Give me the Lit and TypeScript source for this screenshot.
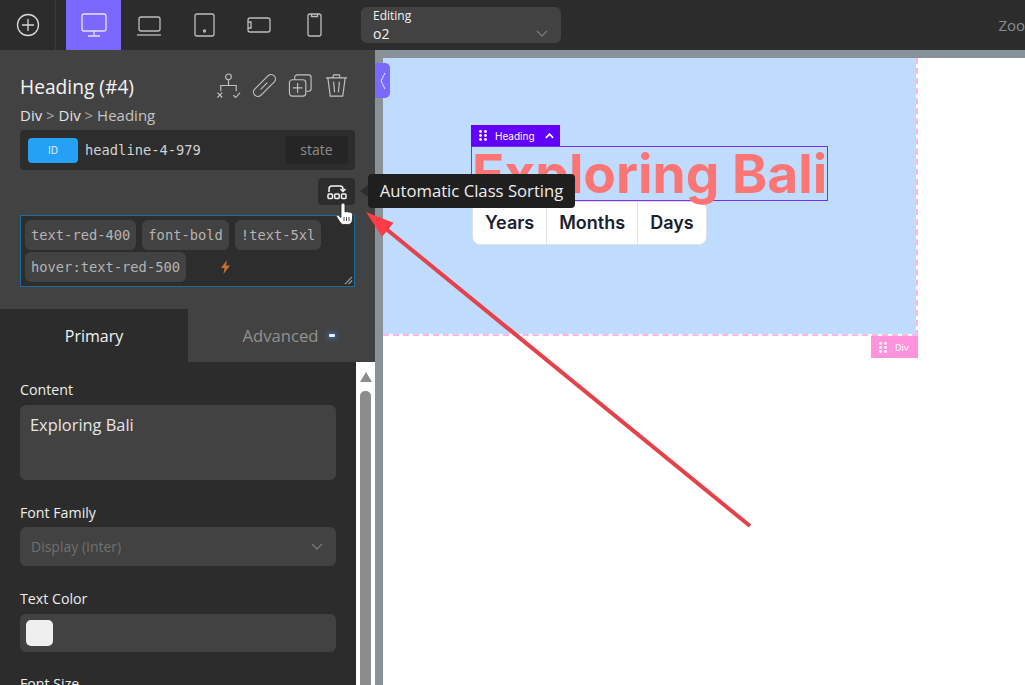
import { LitElement, css, html, svg } from 'lit';
import { customElement } from 'lit/decorators.js';

const deviceIcons = [
  svg`<rect x="3" y="3" width="24" height="17" rx="2"/><path d="M15 20v4M9 25h12"/>`,
  svg`<rect x="5" y="6" width="21" height="14" rx="2"/><path d="M3 24h24"/>`,
  svg`<rect x="6" y="3" width="19" height="22" rx="2"/><circle cx="15.5" cy="20" r="1"/>`,
  svg`<rect x="4" y="7" width="22" height="14" rx="2"/><path d="M4 11h3v6H4"/>`,
  svg`<rect x="9" y="3" width="13" height="22" rx="2"/><path d="M12.5 3v2.500h6V3"/>`,
];

const chevron = html`<svg class="chevron" viewBox="0 0 12 8"><path d="M1 1l5 5 5-5"/></svg>`;

const dragDots = html`<svg class="dots" viewBox="0 0 8 11">
  <circle cx="1.500" cy="1.500" r="1.400"/><circle cx="6.500" cy="1.500" r="1.400"/>
  <circle cx="1.500" cy="5.500" r="1.400"/><circle cx="6.500" cy="5.500" r="1.400"/>
  <circle cx="1.500" cy="9.500" r="1.400"/><circle cx="6.500" cy="9.500" r="1.400"/>
</svg>`;

@customElement('app-root')
export class AppRoot extends LitElement {
  render() {
    return html`
      <div class="top">
        <div class="add">
          <svg viewBox="0 0 24 24"><circle cx="12" cy="12" r="10.500"/><path d="M12 6v12M6 12h12"/></svg>
        </div>
        <div class="devices">
          ${deviceIcons.map(
            (icon, i) => html`<div class="device ${i === 0 ? 'on' : ''}"><svg viewBox="0 0 30 28">${icon}</svg></div>`
          )}
        </div>
        <div class="editing">
          <span class="editing-label">Editing</span>
          <span class="editing-value">o2</span>
          ${chevron}
        </div>
        <span class="zoom">Zoom</span>
      </div>

      <div class="main">
        <aside class="side">
          <div class="head">
            <div class="title-row">
              <h2>Heading (#4)</h2>
              <div class="actions">
                <svg viewBox="0 0 26 26"><circle cx="13" cy="4" r="3"/><path d="M13 7v6M5 19v-6h16v6M1.500 20.500l5 5M6.500 20.500l-5 5M18 23l2.500 2.500L25 20.500"/></svg>
                <svg viewBox="0 0 26 26"><path d="M2.820 16.820L16.820 2.820a4.500 4.500 0 016.360 6.360L9.180 23.180a4.500 4.500 0 01-6.360-6.360zM9 17l7-7"/></svg>
                <svg viewBox="0 0 26 26"><rect x="1.500" y="7" width="17" height="17" rx="3"/><path d="M7 7V4.500a2.500 2.500 0 012.500-2.500h12A2.500 2.500 0 0124 4.500v12a2.500 2.500 0 01-2.500 2.500H19M10 10.500v10M5 15.500h10"/></svg>
                <svg viewBox="0 0 26 26"><path d="M2 5h22M9 5l1-3h6l1 3M4 5l2.500 19h13L22 5M10 9l1 11M16 9l-1 11"/></svg>
              </div>
            </div>
            <div class="crumbs">Div <i>&gt;</i> Div <i>&gt;</i> <b>Heading</b></div>
            <div class="id-bar">
              <span class="id-chip">ID</span>
              <span class="id-name">headline-4-979</span>
              <span class="state">state</span>
            </div>
            <div class="sort-row">
              <div class="sort">
                <svg viewBox="0 0 20 16">
                  <path d="M2 8V5a3 3 0 013-3h8a3 3 0 013 3v2.500M13.500 5L16 7.500 18.500 5" />
                  <rect x="1" y="10" width="4.500" height="4.500" rx="1"/><rect x="7.700" y="10" width="4.500" height="4.500" rx="1"/><rect x="14.500" y="10" width="4.500" height="4.500" rx="1"/>
                </svg>
              </div>
            </div>
            <div class="classes">
              <span class="chip">text-red-400</span>
              <span class="chip">font-bold</span>
              <span class="chip">!text-5xl</span>
              <span class="chip">hover:text-red-500</span>
              <svg class="bolt" viewBox="0 0 9 14"><path d="M6 0L0 8h3.500L2.500 14 9 5.500H5z"/></svg>
              <svg class="grip" viewBox="0 0 10 10"><path d="M1 9l8-8M5 9l4-4"/></svg>
            </div>
          </div>

          <div class="tabs">
            <div class="tab on">Primary</div>
            <div class="tab adv">Advanced<span class="pip"></span></div>
          </div>

          <div class="body">
            <div class="fields">
              <label>Content</label>
              <div class="input area">Exploring Bali</div>
              <label>Font Family</label>
              <div class="input select">Display (Inter)${chevron}</div>
              <label>Text Color</label>
              <div class="input color"><span class="swatch"></span></div>
              <label>Font Size</label>
            </div>
            <div class="scroll">
              <span class="up"></span>
              <span class="thumb"></span>
            </div>
          </div>
        </aside>

        <section class="canvas">
          <div class="page">
            <div class="block">
              <div class="heading-wrap">
                <div class="tag heading-tag">${dragDots}<span>Heading</span>
                  <svg class="caret" viewBox="0 0 10 6"><path d="M1 5l4-4 4 4"/></svg>
                </div>
                <h1>Exploring Bali</h1>
              </div>
              <div class="range">
                <span>Years</span><span>Months</span><span>Days</span>
              </div>
              <div class="tag div-tag">${dragDots}<span>Div</span></div>
            </div>
          </div>
          <div class="toggle">
            <svg viewBox="0 0 6 18"><path d="M5 1L1 9l4 8"/></svg>
          </div>
        </section>
      </div>

      <div class="tooltip">Automatic Class Sorting</div>
      <svg class="cursor" viewBox="0 0 17 22">
        <path d="M5 2a2 2 0 014 0V9h.5a1.800 1.800 0 013 .5 1.800 1.800 0 013 .5A1.800 1.800 0 0116.500 11.500V16c0 3-2 5.500-4 5.500H7.500C5 21.500 4 19 2 16L.7 14c-.8-1.500 1-2.500 2-1.500L5 14.500z"/>
        <path class="cursor-line" d="M8 14v4M10.500 14v4M13 14v4"/>
      </svg>
      <svg class="arrow" viewBox="0 0 1025 685">
        <path d="M750 526L385 228"/>
        <path class="arrow-tip" d="M366 212l27.500 10.700-5.500 7 -6 7z"/>
      </svg>
    `;
  }

  static styles = css`
    :host {
      display: block;
      position: relative;
      width: 1025px;
      height: 685px;
      overflow: hidden;
      font-family: 'Open Sans', 'Noto Sans', sans-serif;
      color: #f2f2f2;
      background: #2c2c2c;
    }

    svg {
      display: block;
      fill: none;
      stroke: currentColor;
    }

    .top {
      display: flex;
      align-items: center;
      height: 50px;
      background: #2c2c2c;
    }

    .add {
      display: flex;
      align-items: center;
      justify-content: center;
      box-sizing: border-box;
      width: 56px;
      height: 50px;
      border-right: 1px solid #363c3f;
      color: #d8d8d8;
    }

    .add svg {
      width: 24px;
      height: 24px;
      stroke-width: 1.300;
    }

    .devices {
      display: flex;
      margin-left: 10px;
    }

    .device {
      display: flex;
      align-items: center;
      justify-content: center;
      width: 55px;
      height: 50px;
      color: #bdbdbd;
    }

    .device.on {
      background: #7b68ff;
      color: #e6e3ff;
    }

    .device svg {
      width: 30px;
      height: 28px;
      stroke-width: 1.300;
    }

    .editing {
      position: relative;
      display: flex;
      flex-direction: column;
      box-sizing: border-box;
      width: 200px;
      height: 36px;
      margin-left: 20px;
      padding: 0 12px;
      border-radius: 6px;
      background: #424242;
      line-height: 18px;
    }

    .editing-label {
      font-size: 12px;
    }

    .editing-value {
      font-size: 14px;
    }

    .chevron {
      width: 12px;
      height: 8px;
      color: #777;
      stroke-width: 1.400;
    }

    .editing .chevron {
      position: absolute;
      right: 13px;
      bottom: 5px;
    }

    .zoom {
      margin-left: auto;
      margin-right: -14px;
      color: #8c8c8c;
      font-size: 15px;
    }

    .main {
      display: flex;
      height: 635px;
    }

    .side {
      display: flex;
      flex-direction: column;
      width: 375px;
      flex: none;
      background: #424242;
    }

    .head {
      box-sizing: border-box;
      height: 259px;
      padding: 20px 20px 0;
    }

    .title-row {
      display: flex;
      align-items: center;
      justify-content: space-between;
      height: 32px;
    }

    h2 {
      margin: 0;
      font-size: 19.200px;
      font-weight: 400;
      color: #f4f4f4;
    }

    .actions {
      display: flex;
      gap: 11px;
      margin: -2px 6px 0 0;
      color: #c2c2c2;
    }

    .actions svg {
      width: 25px;
      height: 25px;
      stroke-width: 1.200;
    }

    .crumbs {
      margin-top: 4px;
      font-size: 15px;
      line-height: 18px;
      color: #e4e4e4;
    }

    .crumbs i {
      font-style: normal;
      color: #a8a8a8;
    }

    .crumbs b {
      font-weight: 400;
      color: #c4c4c4;
    }

    .id-bar {
      display: flex;
      align-items: center;
      box-sizing: border-box;
      height: 40px;
      margin-top: 6px;
      padding: 0 7px 0 8px;
      border-radius: 4px;
      background: #2d2d2d;
    }

    .id-chip {
      width: 50px;
      height: 25px;
      border-radius: 4px;
      background: #24a0f5;
      color: #e8f5ff;
      font-size: 10px;
      line-height: 25px;
      text-align: center;
    }

    .id-name {
      margin-left: 7px;
      font: 13.750px 'DejaVu Sans Mono', monospace;
      color: #d2d2d2;
    }

    .state {
      width: 63px;
      height: 28px;
      margin-left: auto;
      border-radius: 4px;
      background: #252525;
      color: #8d8d8d;
      font-size: 14px;
      line-height: 28px;
      text-align: center;
    }

    .sort-row {
      display: flex;
      justify-content: flex-end;
      margin-top: 8px;
    }

    .sort {
      display: flex;
      align-items: center;
      justify-content: center;
      width: 37px;
      height: 27px;
      border-radius: 4px;
      background: #2d2d2d;
      color: #f5f5f5;
    }

    .sort svg {
      width: 20px;
      height: 16px;
      stroke-width: 1.500;
    }

    .classes {
      position: relative;
      display: flex;
      flex-wrap: wrap;
      align-content: flex-start;
      gap: 2px 6px;
      box-sizing: border-box;
      height: 72px;
      margin-top: 10px;
      padding: 4px;
      border: 1px solid #1f6a9c;
      background: #2d2d2d;
    }

    .chip {
      height: 30px;
      padding: 0 6px;
      border-radius: 6px;
      background: #424242;
      color: #b4b4b4;
      font: 13.750px/30px 'DejaVu Sans Mono', monospace;
    }

    .bolt {
      position: absolute;
      left: 200px;
      top: 44px;
      width: 9px;
      height: 14px;
      fill: #c8702e;
      stroke: none;
    }

    .grip {
      position: absolute;
      right: 1px;
      bottom: 1px;
      width: 9px;
      height: 9px;
      color: #9a9a9a;
      stroke-width: 1.400;
    }

    .tabs {
      display: flex;
      height: 53px;
    }

    .tab {
      display: flex;
      align-items: center;
      justify-content: center;
      font-size: 16px;
      color: #919191;
    }

    .tab.on {
      width: 188px;
      background: #2c2c2c;
      color: #f2f2f2;
    }

    .tab.adv {
      flex: 1;
      padding-left: 14px;
      font-size: 16.700px;
    }

    .pip {
      width: 6px;
      height: 3px;
      margin-left: 10px;
      border-radius: 1px;
      background: #e6f0fc;
      box-shadow: 0 0 5px 2px rgba(66, 133, 210, 0.55);
    }

    .body {
      display: flex;
      flex: 1;
      min-height: 0;
      background: #2c2c2c;
    }

    .fields {
      flex: 1;
      min-width: 0;
      padding: 17px 20px 0;
    }

    label {
      display: block;
      height: 20px;
      font-size: 14.200px;
      line-height: 22px;
      color: #eee;
    }

    .input {
      margin-top: 6px;
      border-radius: 6px;
      background: #424242;
    }

    .area {
      box-sizing: border-box;
      height: 75px;
      margin-bottom: 22px;
      padding: 8px 10px;
      font-size: 16.400px;
      line-height: 24px;
      color: #e6e6e6;
    }

    .select {
      display: flex;
      align-items: center;
      justify-content: space-between;
      box-sizing: border-box;
      height: 39px;
      margin-top: 5px;
      margin-bottom: 22px;
      padding: 0 13px 0 11px;
      font-size: 14px;
      color: #6f6f6f;
    }

    .color {
      display: flex;
      align-items: center;
      height: 38px;
      margin-bottom: 21px;
      padding-left: 6px;
    }

    .swatch {
      width: 27px;
      height: 26px;
      border-radius: 5px;
      background: #efefef;
    }

    .scroll {
      display: flex;
      flex-direction: column;
      align-items: center;
      width: 19px;
      background: #fff;
    }

    .up {
      width: 0;
      height: 0;
      margin-top: 10px;
      border-left: 6.500px solid transparent;
      border-right: 6.500px solid transparent;
      border-bottom: 10px solid #8c8c8c;
    }

    .thumb {
      flex: 1;
      width: 11px;
      margin-top: 9px;
      border-radius: 5px 5px 0 0;
      background: #8c8c8c;
    }

    .canvas {
      position: relative;
      flex: 1;
      min-width: 0;
      padding: 8px 0 0 8px;
      background: #8a9299;
    }

    .page {
      height: 100%;
      background: #fff;
    }

    .block {
      position: relative;
      box-sizing: border-box;
      width: 535px;
      height: 278px;
      padding: 88px 0 0 88px;
      border-right: 2px dashed #ffb3e8;
      border-bottom: 2px dashed #ffb3e8;
      background: #bfdbfe;
      background-clip: padding-box;
      font-family: Inter, sans-serif;
    }

    .heading-wrap {
      position: relative;
      box-sizing: border-box;
      width: 357px;
      height: 55px;
      border: 1px solid #7a2cff;
    }

    h1 {
      margin: 0;
      color: #fb7575;
      font-size: 53.300px;
      font-weight: 700;
      line-height: 53px;
      white-space: nowrap;
    }

    .tag {
      position: absolute;
      display: flex;
      align-items: center;
      color: #fff;
      font-size: 10px;
    }

    .dots {
      width: 8px;
      height: 11px;
      fill: currentColor;
      stroke: none;
    }

    .heading-tag {
      left: -1px;
      top: -22px;
      box-sizing: border-box;
      width: 89px;
      height: 21px;
      padding-left: 8px;
      background: #6200ff;
      gap: 8px;
    }

    .caret {
      width: 9px;
      height: 6px;
      margin-left: 2px;
      stroke-width: 2;
    }

    .div-tag {
      right: -2px;
      bottom: -24px;
      box-sizing: border-box;
      width: 47px;
      height: 22px;
      padding-left: 8px;
      gap: 8px;
      background: #ff94dd;
      font-size: 9px;
    }

    .range {
      display: inline-flex;
      box-sizing: border-box;
      margin-left: 1px;
      height: 44px;
      border: 1px solid #dde2ea;
      border-radius: 8px;
      background: #fff;
      color: #18212e;
      font-size: 18px;
      font-weight: 600;
      line-height: 42px;
    }

    .range span {
      padding: 0 12px;
      border-left: 1px solid #dde2ea;
    }

    .range span:first-child {
      border-left: none;
    }

    .toggle {
      position: absolute;
      left: 0;
      top: 13px;
      display: flex;
      align-items: center;
      justify-content: center;
      width: 15px;
      height: 35px;
      border-radius: 0 5px 5px 0;
      background: #7b68ff;
      color: #e6e3ff;
    }

    .toggle svg {
      width: 6px;
      height: 18px;
      stroke-width: 1;
    }

    .tooltip {
      position: absolute;
      left: 368px;
      top: 174px;
      box-sizing: border-box;
      width: 207px;
      height: 34px;
      border-radius: 4px;
      background: #1f1f1f;
      color: #eee;
      font-size: 16.700px;
      line-height: 34px;
      text-align: center;
      white-space: nowrap;
    }

    .tooltip::before {
      content: '';
      position: absolute;
      left: -8px;
      top: 11px;
      border-top: 6px solid transparent;
      border-bottom: 6px solid transparent;
      border-right: 8px solid #2d2d2d;
    }

    .cursor {
      position: absolute;
      left: 336px;
      top: 203px;
      width: 17px;
      height: 22px;
      fill: #fff;
      stroke: #222;
      stroke-width: 0.800;
    }

    .cursor-line {
      stroke-width: 0.800;
    }

    .arrow {
      position: absolute;
      left: 0;
      top: 0;
      width: 1025px;
      height: 685px;
      pointer-events: none;
      stroke: #e5414b;
      stroke-width: 4;
    }

    .arrow-tip {
      fill: #ff3b45;
      stroke: none;
    }
  `;
}

declare global {
  interface HTMLElementTagNameMap {
    'app-root': AppRoot;
  }
}
